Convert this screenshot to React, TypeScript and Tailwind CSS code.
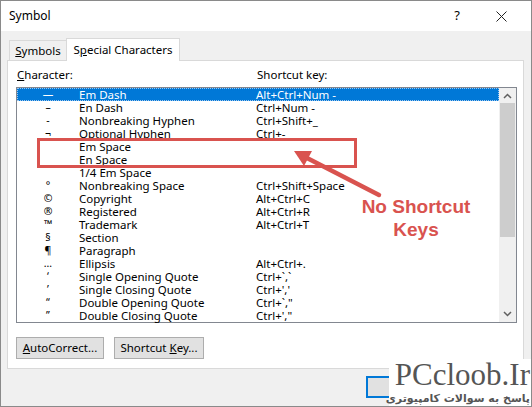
import React from "react";

type Row = { sym: string; name: string; key: string };

const rows: Row[] = [
  { sym: "—", name: "Em Dash", key: "Alt+Ctrl+Num -" },
  { sym: "–", name: "En Dash", key: "Ctrl+Num -" },
  { sym: "-", name: "Nonbreaking Hyphen", key: "Ctrl+Shift+_" },
  { sym: "¬", name: "Optional Hyphen", key: "Ctrl+-" },
  { sym: "", name: "Em Space", key: "" },
  { sym: "", name: "En Space", key: "" },
  { sym: "", name: "1/4 Em Space", key: "" },
  { sym: "°", name: "Nonbreaking Space", key: "Ctrl+Shift+Space" },
  { sym: "©", name: "Copyright", key: "Alt+Ctrl+C" },
  { sym: "®", name: "Registered", key: "Alt+Ctrl+R" },
  { sym: "™", name: "Trademark", key: "Alt+Ctrl+T" },
  { sym: "§", name: "Section", key: "" },
  { sym: "¶", name: "Paragraph", key: "" },
  { sym: "…", name: "Ellipsis", key: "Alt+Ctrl+." },
  { sym: "‘", name: "Single Opening Quote", key: "Ctrl+`,`" },
  { sym: "’", name: "Single Closing Quote", key: "Ctrl+','" },
  { sym: "“", name: "Double Opening Quote", key: "Ctrl+`,\"" },
  { sym: "”", name: "Double Closing Quote", key: "Ctrl+',\"" },
];

const Annotation = () => (
  <svg
    className="pointer-events-none absolute left-0 top-0"
    width="532"
    height="407"
    viewBox="0 0 532 407"
  >
    <rect
      x="37.5"
      y="138.5"
      width="317"
      height="27"
      fill="none"
      stroke="#d9534f"
      strokeWidth="3"
    />
    <line
      x1="378"
      y1="194"
      x2="306"
      y2="157"
      stroke="#d9534f"
      strokeWidth="4.5"
      strokeLinecap="round"
    />
    <polygon points="293,150 311,150 303,165" fill="#d9534f" />
  </svg>
);

export default function App() {
  return (
    <div className="relative flex h-[407px] w-[532px] flex-col overflow-hidden border border-[#8a8a8a] bg-[#f0f0f0] font-['Noto_Sans',sans-serif] text-[11.5px] text-black">
      {/* barra de título */}
      <div className="flex h-[30px] shrink-0 items-center bg-white pl-[8px] pr-[24px]">
        <span className="flex-1 text-[12px]">Symbol</span>
        <span className="mr-[36px] text-[13px]">?</span>
        <svg width="11" height="11" viewBox="0 0 11 11">
          <path d="M0.5 0.5 L10.5 10.5 M10.5 0.5 L0.5 10.5" stroke="#222" strokeWidth="1" />
        </svg>
      </div>

      <div className="ml-[6px] mr-[7px] pt-[7px]">
        {/* abas */}
        <div className="flex h-[22px] items-end pl-[2px]">
          <div className="flex h-[20px] w-[57px] items-center justify-center border border-b-0 border-r-0 border-[#d9d9d9] text-[11.5px]">
            <span>
              <u>S</u>ymbols
            </span>
          </div>
          <div className="relative z-10 -mb-px flex h-[23px] w-[114px] items-center justify-center border border-b-0 border-[#d9d9d9] bg-white text-[11.5px]">
            <span>
              S<u>p</u>ecial Characters
            </span>
          </div>
        </div>

        {/* painel */}
        <div className="h-[309px] border border-[#d9d9d9] bg-white pl-[8px] pt-[6px]">
          <div className="flex h-[16px] items-center pl-[1px] leading-none">
            <span className="w-[240px]">
              <u>C</u>haracter:
            </span>
            <span>Shortcut key:</span>
          </div>

          <div className="mt-[4px] flex h-[236px] w-[501px] border border-[#828790]">
            <div className="flex-1">
              {rows.map((r, idx) => (
                <div
                  key={idx}
                  className={
                    idx === 0
                      ? "flex h-[13px] items-center bg-[#0078d7] leading-[13px] text-white outline-1 -outline-offset-1 outline-dotted outline-[#9cc6f0]"
                      : "flex h-[13px] items-center leading-[13px]"
                  }
                >
                  <span className="w-[62px] text-center text-[10.5px]">{r.sym}</span>
                  <span className="w-[177px] whitespace-nowrap">{r.name}</span>
                  <span className="whitespace-nowrap">{r.key}</span>
                </div>
              ))}
            </div>
            {/* barra de rolagem */}
            <div className="flex w-[17px] flex-col bg-[#f0f0f0]">
              <div className="flex h-[15px] items-center justify-center">
                <svg width="9" height="6" viewBox="0 0 9 6">
                  <path d="M1 5 L4.5 1.5 L8 5" fill="none" stroke="#606060" strokeWidth="1.5" />
                </svg>
              </div>
              <div className="mx-[1px] h-[134px] bg-[#cdcdcd]" />
              <div className="flex-1" />
              <div className="flex h-[17px] items-center justify-center">
                <svg width="9" height="6" viewBox="0 0 9 6">
                  <path d="M1 1 L4.5 4.5 L8 1" fill="none" stroke="#606060" strokeWidth="1.5" />
                </svg>
              </div>
            </div>
          </div>

          <div className="mt-[14px] flex gap-[10px]">
            <button className="flex h-[22px] w-[88px] items-center justify-center border border-[#adadad] bg-[#e1e1e1] text-[11.5px]">
              <span>
                <u>A</u>utoCorrect...
              </span>
            </button>
            <button className="flex h-[22px] w-[90px] items-center justify-center border border-[#adadad] bg-[#e1e1e1] text-[11.5px]">
              <span>
                Shortcut <u>K</u>ey...
              </span>
            </button>
          </div>
        </div>
      </div>

      {/* botões inferiores */}
      <div className="flex flex-1 items-start pl-[365px] pt-[7px]">
        <div className="h-[22px] w-[75px] border-2 border-[#0078d7] bg-[#e1e1e1]" />
      </div>

      <Annotation />

      <div className="absolute left-[360px] top-[194px] w-[110px] text-center font-['Liberation_Sans',sans-serif] text-[19px] font-bold leading-[23px] text-[#d9534f]">
        No Shortcut
        <br />
        Keys
      </div>

      {/* marca d'água */}
      <div className="absolute left-[388px] top-[358px] flex h-[49px] w-[144px] flex-col items-end bg-white pr-[3px]">
        <span className="whitespace-nowrap font-['Liberation_Serif',serif] text-[31px] leading-[31px] text-[#555]">
          PCcloob.Ir
        </span>
        <span
          dir="rtl"
          className="whitespace-nowrap font-['DejaVu_Sans',sans-serif] text-[11px] font-bold leading-[17px] text-[#555]"
        >
          پاسخ به سوالات کامپیوتری
        </span>
      </div>
    </div>
  );
}
